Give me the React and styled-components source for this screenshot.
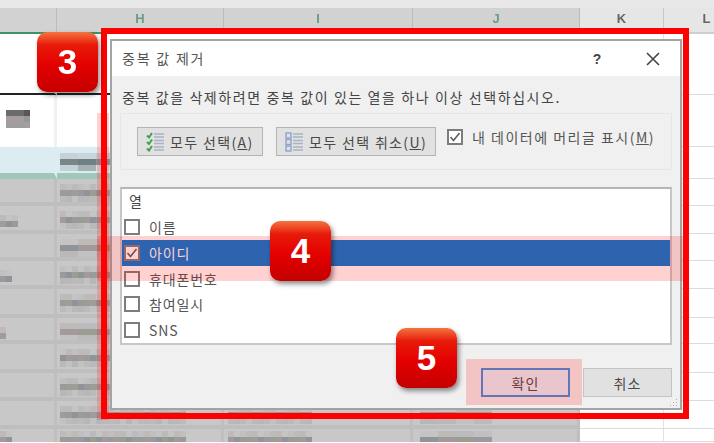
import React from 'react';
import styled, { createGlobalStyle } from 'styled-components';

const Global = createGlobalStyle`
  html, body { margin: 0; padding: 0; background: #fff; overflow: hidden; }
  * { box-sizing: border-box; }
`;

const Page = styled.div`
  position: relative;
  width: 714px;
  height: 443px;
  overflow: hidden;
  filter: blur(0.7px);
  font-family: "Noto Sans CJK KR", "Noto Sans", sans-serif;
  color: #444;
`;

const TopStrip = styled.div`
  height: 8px;
  background: #e8e8e8;
`;

const COLUMNS = '57px 167px 189px 167px 84px 86px';

const HeaderRow = styled.div`
  display: grid;
  grid-template-columns: ${COLUMNS};
  height: 26px;
`;

const HeaderCell = styled.div`
  display: flex;
  align-items: center;
  justify-content: center;
  height: 24px;
  padding-bottom: 4px;
  font: bold 13px "Liberation Sans", sans-serif;
  background: ${p => (p.$active ? '#d2d2d2' : '#e6e6e6')};
  color: ${p => (p.$active ? '#6a9c86' : '#666')};
  border-right: 1px solid ${p => (p.$active ? '#bdbdbd' : '#c8c8c8')};
  box-shadow: 0 2px 0 ${p => (p.$active ? '#3f9268' : '#cfcfcf')};
`;

const Row = styled.div`
  display: grid;
  grid-template-columns: ${COLUMNS};
  height: ${p => p.$h}px;
`;

const tones = {
  blank: { bg: '#fff', line: '#fff', sep: '#f1f1f1' },
  title: { bg: '#fff', line: '#222', sep: '#fff' },
  head: { bg: '#dcecf2', line: '#a0c8b8', sep: '#dcecf2' },
  data: { bg: '#c8c8c8', line: '#bebebe', sep: '#bfbfbf' },
};

const Cell = styled.div`
  overflow: hidden;
  background: ${p => tones[p.$tone].bg};
  border-bottom: ${p => p.$line}px solid ${p => tones[p.$tone].line};
  border-right: 3px solid ${p => tones[p.$tone].sep};
  padding: ${p => p.$pt || 0}px 0 0 ${p => p.$pl || 0}px;
`;

const Plain = styled.div`
  background: #fff;
  border-bottom: 1px solid #dcdcdc;
  border-right: 1px solid #e2e2e2;
`;

const Mosaic = styled.div`
  display: grid;
  grid-template-columns: repeat(${p => p.$cols}, 6px);
  grid-auto-rows: 6px;
  width: max-content;
`;

const Tile = styled.span`
  display: block;
  background: ${p => p.$c};
`;

const palettes = {
  data: [
    ['#c4c4c4', '#bdbab8', '#b9bbbd', '#c2bfc0'],
    ['#9a9a9c', '#8f9498', '#a39a9c', '#9b9c92'],
    ['#bbbbbb', '#b5b8bb', '#bdb8b8', '#c2c2c2'],
  ],
  head: [
    ['#c9d6da', '#bcd0d6', '#d4e2e6', '#c6d3d6'],
    ['#7b8488', '#6f7f86', '#84949c', '#8a8488'],
    ['#a9b5b4', '#c0d2d6', '#a5b3b0', '#cfe0e4'],
  ],
  title: [
    ['#5b5556', '#6f6d70', '#7d7f84', '#6b6b6f'],
    ['#a59d9f', '#979797', '#9a9a9c', '#9b9b9d'],
    ['#d0d0d0', '#9e9e9e', '#a0a0a0', '#cdd0d2'],
  ],
};

const Blocks = ({ cols, rows = 3, seed = 1, kind = 'data' }) => {
  const tiles = [];
  for (let r = 0; r < rows; r++) {
    for (let c = 0; c < cols; c++) {
      const pal = palettes[kind][r % 3];
      tiles.push(<Tile key={`${r}-${c}`} $c={pal[(seed * 7 + c * 3 + r * 5 + ((c * seed) % 3)) % 4]} />);
    }
  }
  return <Mosaic $cols={cols}>{tiles}</Mosaic>;
};

const dataRows = [
  { h: 27, a: 0, seed: 2 },
  { h: 28, a: 3, seed: 3 },
  { h: 27, a: 0, seed: 4 },
  { h: 28, a: 2, seed: 5 },
  { h: 29, a: 0, seed: 6 },
  { h: 26, a: 1, seed: 7 },
  { h: 29, a: 0, seed: 8 },
  { h: 28, a: 0, seed: 9 },
];

const Sheet = () => (
  <>
    <TopStrip />
    <HeaderRow>
      <HeaderCell $active />
      <HeaderCell $active>H</HeaderCell>
      <HeaderCell $active>I</HeaderCell>
      <HeaderCell $active>J</HeaderCell>
      <HeaderCell>K</HeaderCell>
      <HeaderCell>L</HeaderCell>
    </HeaderRow>
    <Row $h={61}>
      {[0, 1, 2, 3].map(i => <Cell key={i} $tone="title" $line={2} />)}
      <Plain /><Plain />
    </Row>
    <Row $h={52}>
      <Cell $tone="blank" $line={0} $pt={15} $pl={6}><Blocks cols={4} kind="title" /></Cell>
      <Cell $tone="blank" $line={0} /><Cell $tone="blank" $line={0} /><Cell $tone="blank" $line={0} />
      <Plain /><Plain />
    </Row>
    <Row $h={32}>
      <Cell $tone="head" $line={6} />
      <Cell $tone="head" $line={6} $pt={6} $pl={3}><Blocks cols={10} kind="head" /></Cell>
      <Cell $tone="head" $line={6} /><Cell $tone="head" $line={6} />
      <Plain /><Plain />
    </Row>
    {dataRows.map((r, i) => (
      <Row key={i} $h={r.h}>
        <Cell $tone="data" $line={4} $pt={9}>{r.a > 0 && <Blocks cols={r.a} rows={2} seed={r.seed} />}</Cell>
        <Cell $tone="data" $line={4} $pt={5} $pl={3}><Blocks cols={10} seed={r.seed} /></Cell>
        <Cell $tone="data" $line={4} /><Cell $tone="data" $line={4} />
        <Plain /><Plain />
      </Row>
    ))}
    <Row $h={28}>
      <Cell $tone="data" $line={4} />
      <Cell $tone="data" $line={4} $pt={5} $pl={3}><Blocks cols={21} seed={11} /></Cell>
      <Cell $tone="data" $line={4} $pt={5} $pl={4}><Blocks cols={14} seed={12} /></Cell>
      <Cell $tone="data" $line={4} $pt={5} $pl={7}><Blocks cols={12} seed={13} /></Cell>
      <Plain /><Plain />
    </Row>
    <Row $h={13}>
      <Cell $tone="data" $line={0} $pt={2}><Blocks cols={2} rows={2} seed={3} /></Cell>
      <Cell $tone="data" $line={0} $pt={2} $pl={3}><Blocks cols={21} rows={2} seed={14} /></Cell>
      <Cell $tone="data" $line={0} $pt={2} $pl={4}><Blocks cols={14} rows={2} seed={15} /></Cell>
      <Cell $tone="data" $line={0} $pt={2} $pl={7}><Blocks cols={12} rows={2} seed={16} /></Cell>
      <Plain /><Plain />
    </Row>
  </>
);

const Tint = styled.div`
  position: absolute;
  left: ${p => p.$x}px;
  top: ${p => p.$y}px;
  width: ${p => p.$w}px;
  height: ${p => p.$h}px;
  background: rgba(255, 0, 0, 0.18);
`;

const Frame = styled.div`
  position: absolute;
  left: 101px;
  top: 28px;
  width: 588px;
  height: 391px;
  border: 6px solid #fe0000;
  padding: 5px 1px 3px 3px;
  display: flex;
`;

const Dialog = styled.div`
  flex: 1;
  display: flex;
  flex-direction: column;
  border: 2px solid #a3a3a3;
  background: #f0f0f0;
`;

const TitleBar = styled.div`
  height: 35px;
  flex: none;
  background: #fff;
  display: flex;
  align-items: center;
  padding: 0 20px 0 10px;
  font-size: 14px;
  letter-spacing: 1.8px;
  color: #555;
`;

const TitleText = styled.span`
  flex: 1;
  margin-top: -2px;
`;

const Help = styled.span`
  font: bold 14px "Liberation Sans", sans-serif;
  color: #444;
  margin-right: 43px;
`;

const Body = styled.div`
  flex: 1;
  display: flex;
  flex-direction: column;
  padding: 0 8px 0 8px;
`;

const Message = styled.div`
  height: 37px;
  padding: 11px 0 0 2px;
  font-size: 14px;
  line-height: 20px;
  white-space: nowrap;
  letter-spacing: 1.6px;
  color: #444;
`;

const Group = styled.div`
  height: 57px;
  flex: none;
  border: 1px solid #e6e6e6;
  display: flex;
  align-items: flex-start;
  padding: 13px 0 0 16px;
`;

const ToolButton = styled.div`
  width: ${p => p.$w}px;
  height: 29px;
  margin-right: ${p => p.$mr}px;
  display: flex;
  align-items: center;
  gap: 5px;
  padding-left: 8px;
  background: #e1e1e1;
  border: 1px solid #b4b4b4;
  font-size: 14px;
  letter-spacing: 1.35px;
  white-space: nowrap;
  color: #484848;
`;

const Key = styled.u`
  text-underline-offset: 1px;
`;

const Box = styled.span`
  width: 16px;
  height: 16px;
  flex: none;
  display: inline-flex;
  align-items: center;
  justify-content: center;
  background: #fff;
  border: 2px solid #7d7d7d;
`;

const HeaderOption = styled.label`
  display: flex;
  align-items: center;
  gap: 9px;
  height: 16px;
  margin-top: 2px;
  font-size: 14px;
  letter-spacing: 1.5px;
  white-space: nowrap;
  color: #555;
`;

const List = styled.div`
  margin-top: 17px;
  height: 158px;
  flex: none;
  background: #fff;
  border: 2px solid #c6c6cd;
  border-top-color: #b5b5b9;
  display: flex;
  flex-direction: column;
`;

const ListHead = styled.div`
  height: 28.5px;
  padding: 2px 0 0 7px;
  font-size: 14px;
  line-height: 20px;
`;

const Item = styled.div`
  height: 25.8px;
  flex: none;
  display: flex;
  align-items: center;
  gap: 9px;
  padding-left: 2px;
  font-size: 14px;
  letter-spacing: 0.9px;
  background: ${p => (p.$selected ? '#0079d7' : 'transparent')};
  color: ${p => (p.$selected ? '#fff' : '#555')};
`;

const Footer = styled.div`
  margin-top: 23px;
  display: flex;
  justify-content: flex-end;
  gap: 13px;
`;

const DialogButton = styled.div`
  width: 89px;
  height: 29px;
  display: flex;
  align-items: center;
  justify-content: center;
  font-size: 14px;
  letter-spacing: 1px;
  background: ${p => (p.$primary ? '#e5f1fb' : '#e1e1e1')};
  color: #4a4a4a;
  border: ${p => (p.$primary ? '2px solid #3f8fe0' : '1px solid #c4c4c4')};
`;

const Grip = styled.svg`
  position: absolute;
  right: 5px;
  bottom: 5px;
`;

const Badge = styled.div`
  position: absolute;
  left: ${p => p.$x}px;
  top: ${p => p.$y}px;
  width: 61px;
  height: 60px;
  border-radius: 10px;
  display: flex;
  align-items: center;
  justify-content: center;
  background: linear-gradient(#f4743f 0%, #e81a0a 22%, #e40000 55%, #c40000 100%);
  box-shadow: 2px 3px 5px rgba(0, 0, 0, 0.45);
  color: #fff;
  font: bold 35px "Liberation Sans", sans-serif;
`;

const Check = () => (
  <svg width="12" height="12" viewBox="0 0 12 12" fill="none">
    <path d="M1.5 6 L4.5 9.5 L10.5 2" stroke="#606060" strokeWidth="1.7" />
  </svg>
);

const SelectIcon = ({ tone, tick }) => (
  <svg width="19" height="20" viewBox="0 0 19 20" fill="none">
    {[3.5, 10, 16.5].map(y => (
      <g key={y}>
        {tick
          ? <path d={`M1 ${y} L3 ${y + 2} L6 ${y - 2.5}`} stroke={tone} strokeWidth="2" />
          : <rect x="1" y={y - 2.5} width="5" height="5" fill="none" stroke={tone} strokeWidth="1.4" />}
        <path d={`M8 ${y - 1.5} H18 M8 ${y + 1.5} H18`} stroke="#a9b3c4" strokeWidth="1.4" />
      </g>
    ))}
  </svg>
);

const columns = ['이름', '아이디', '휴대폰번호', '참여일시', 'SNS'];

export default function App() {
  return (
    <Page>
      <Global />
      <Sheet />
      <Tint $x={97} $y={113} $w={12} $h={307} />
      <Frame>
        <Dialog>
          <TitleBar>
            <TitleText>중복 값 제거</TitleText>
            <Help>?</Help>
            <svg width="14" height="14" viewBox="0 0 14 14" fill="none">
              <path d="M1 1 L13 13 M13 1 L1 13" stroke="#444" strokeWidth="1.6" />
            </svg>
          </TitleBar>
          <Body>
            <Message>중복 값을 삭제하려면 중복 값이 있는 열을 하나 이상 선택하십시오.</Message>
            <Group>
              <ToolButton $w={126} $mr={13}>
                <SelectIcon tone="#3fa34d" tick />
                <span>모두 선택(<Key>A</Key>)</span>
              </ToolButton>
              <ToolButton $w={160} $mr={11}>
                <SelectIcon tone="#8fa3cc" />
                <span>모두 선택 취소(<Key>U</Key>)</span>
              </ToolButton>
              <HeaderOption>
                <Box><Check /></Box>
                <span>내 데이터에 머리글 표시(<Key>M</Key>)</span>
              </HeaderOption>
            </Group>
            <List>
              <ListHead>열</ListHead>
              {columns.map(name => {
                const selected = name === '아이디';
                return (
                  <Item key={name} $selected={selected}>
                    <Box>{selected && <Check />}</Box>
                    {name}
                  </Item>
                );
              })}
            </List>
            <Footer>
              <DialogButton $primary>확인</DialogButton>
              <DialogButton>취소</DialogButton>
            </Footer>
          </Body>
          <Grip width="10" height="10" viewBox="0 0 10 10">
            <path d="M8 1h1v1H8zM5 4h1v1H5zM8 4h1v1H8zM2 7h1v1H2zM5 7h1v1H5zM8 7h1v1H8z" fill="#b0b0b0" />
          </Grip>
        </Dialog>
      </Frame>
      <Tint $x={97} $y={236} $w={586} $h={45} />
      <Tint $x={466} $y={359} $w={116} $h={46} />
      <Badge $x={37} $y={32}>3</Badge>
      <Badge $x={270} $y={221}>4</Badge>
      <Badge $x={396} $y={328}>5</Badge>
    </Page>
  );
}
